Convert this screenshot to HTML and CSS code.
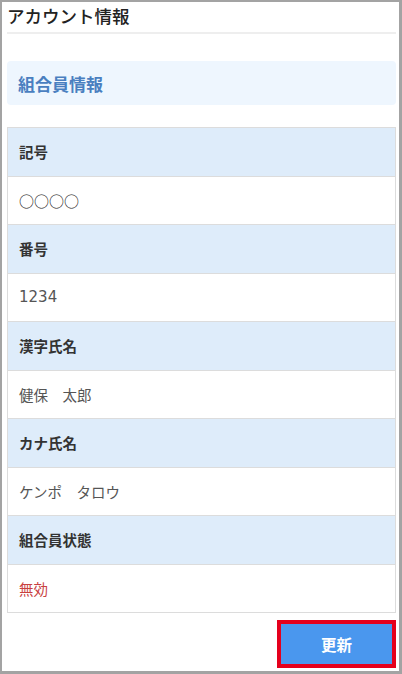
FILE: index.html
```html
<!DOCTYPE html>
<html lang="ja">
<head>
<meta charset="utf-8">
<link rel="stylesheet" href="styles.css">
</head>
<body>
<div class="frame">
  <div class="page">
    <h1 class="title">アカウント情報</h1>
    <div class="section">組合員情報</div>
    <div class="table">
      <div class="label">記号</div>
      <div class="value mark">○○○○</div>
      <div class="label">番号</div>
      <div class="value num">1234</div>
      <div class="label">漢字氏名</div>
      <div class="value">健保　太郎</div>
      <div class="label">カナ氏名</div>
      <div class="value">ケンポ　タロウ</div>
      <div class="label">組合員状態</div>
      <div class="value invalid">無効</div>
    </div>
    <div class="actions">
      <div class="highlight"><button class="btn">更新</button></div>
    </div>
  </div>
</div>
</body>
</html>
```
FILE: styles.css
```css
* { box-sizing: border-box; }
html, body { margin: 0; padding: 0; }
body {
  font-family: "Noto Sans CJK JP", "Noto Sans", sans-serif;
  color: #333;
  background: #fff;
}
.frame {
  width: 402px;
  height: 674px;
  border: 2px solid #a3a3a3;
  border-right-width: 3px;
  border-bottom-width: 3px;
  overflow: hidden;
}
.page {
  padding: 0 3px 0 5px;
}
.title {
  margin: 0;
  font-size: 17.5px;
  font-weight: 500;
  line-height: 28px;
  color: #222;
  padding: 0;
  border-bottom: 2px solid #eeeeee;
  height: 32px;
}
.section {
  margin-top: 27px;
  height: 44px;
  background: #eef6fe;
  border-radius: 4px;
  color: #4a7fc0;
  font-size: 17px;
  font-weight: 700;
  display: flex;
  align-items: center;
  padding-left: 11px;
}
.table {
  margin-top: 22px;
  border: 1px solid #dcdcdc;
  border-bottom: none;
}
.label, .value {
  height: 48.5px;
  display: flex;
  align-items: center;
  padding-left: 11px;
  border-bottom: 1px solid #dcdcdc;
  font-size: 14.5px;
}
.label {
  background: #deecfa;
  font-weight: 700;
  color: #333;
}
.value {
  background: #fff;
  color: #555;
  font-size: 14.5px;
}
.value.mark { color: #222; font-size: 15px; }
.value.num { font-family: "DejaVu Sans", "Noto Sans", sans-serif; font-size: 15px; }
.value.invalid { color: #c9413f; }
.actions {
  display: flex;
  justify-content: flex-end;
  margin-top: 7px;
  padding-right: 0;
}
.highlight {
  border: 4px solid #e5001c;
  padding: 0;
}
.btn {
  display: block;
  width: 111px;
  height: 40px;
  border: none;
  background: #4a97ee;
  color: #fff;
  font-family: inherit;
  font-size: 15.5px;
  font-weight: 700;
  border-radius: 0;
  padding: 0;
}
```
